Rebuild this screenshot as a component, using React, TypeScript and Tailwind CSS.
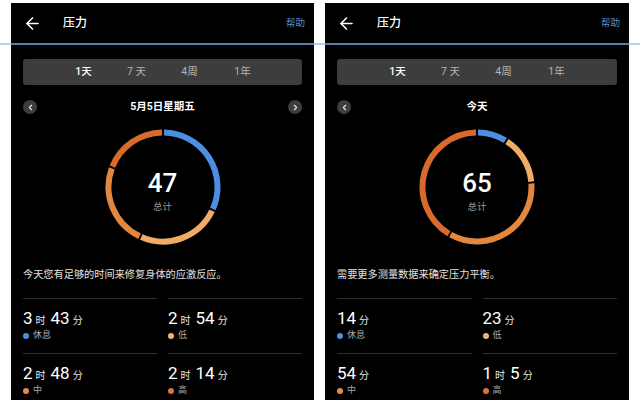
import React from "react";
import { ArrowLeft, ChevronLeft, ChevronRight } from "lucide-react";

type Level = "rest" | "low" | "mid" | "high";

const COLORS: Record<Level, { ring: string; dot: string; label: string }> = {
  rest: { ring: "#4a8fe2", dot: "#4a8fe2", label: "休息" },
  low: { ring: "#f0ab66", dot: "#f1b372", label: "低" },
  mid: { ring: "#e3873f", dot: "#e58b4b", label: "中" },
  high: { ring: "#d86a2b", dot: "#d8743a", label: "高" },
};

const ORDER: Level[] = ["rest", "low", "mid", "high"];

// angle measured clockwise from 12 o'clock
function arcPath(a0: number, a1: number, r = 54.5, c = 60) {
  const rad = (a: number) => ((a - 90) * Math.PI) / 180;
  const x0 = c + r * Math.cos(rad(a0));
  const y0 = c + r * Math.sin(rad(a0));
  const x1 = c + r * Math.cos(rad(a1));
  const y1 = c + r * Math.sin(rad(a1));
  const large = a1 - a0 > 180 ? 1 : 0;
  return `M ${x0} ${y0} A ${r} ${r} 0 ${large} 1 ${x1} ${y1}`;
}

function StressRing({ minutes, total }: { minutes: Record<Level, number>; total: number }) {
  const sum = ORDER.reduce((s, k) => s + minutes[k], 0);
  let start = 0;
  const arcs = ORDER.map((k) => {
    const sweep = (minutes[k] / sum) * 360;
    const seg = { k, a0: start + 1, a1: start + sweep - 1 };
    start += sweep;
    return seg;
  });
  return (
    <div className="relative w-[120px] h-[120px]">
      <svg width="120" height="120" viewBox="0 0 120 120">
        {arcs.map((a) => (
          <path
            key={a.k}
            d={arcPath(a.a0, a.a1)}
            fill="none"
            stroke={COLORS[a.k].ring}
            strokeWidth="6"
          />
        ))}
      </svg>
      <div className="absolute inset-0 flex flex-col items-center pt-[41px]">
        <span className="text-[26px] leading-[30px] font-medium text-white">{total}</span>
        <span className="text-[9.5px] leading-[13px] text-[#9c9c9c] mt-[2px]">总计</span>
      </div>
    </div>
  );
}

function Duration({ m }: { m: number }) {
  const h = Math.floor(m / 60);
  const r = m % 60;
  return (
    <div className="flex items-baseline h-[20px] leading-[20px] text-white">
      {h > 0 && (
        <>
          <span className="text-[17px]">{h}</span>
          <span className="text-[10px] ml-[3px] mr-[5px] text-[#e6e6e6]">时</span>
        </>
      )}
      <span className="text-[17px]">{r}</span>
      <span className="text-[10px] ml-[3px] text-[#e6e6e6]">分</span>
    </div>
  );
}

function StatCell({ level, m }: { level: Level; m: number }) {
  return (
    <div className="border-t border-[#2f2f2f] pt-[9px] pb-[11px]">
      <Duration m={m} />
      <div className="flex items-center h-[13px] mt-[1px]">
        <span
          className="w-[6px] h-[6px] rounded-full"
          style={{ backgroundColor: COLORS[level].dot }}
        />
        <span className="ml-[4px] text-[9px] leading-[13px] text-[#a8a8a8]">
          {COLORS[level].label}
        </span>
      </div>
    </div>
  );
}

function RoundButton({ dir }: { dir: "left" | "right" }) {
  return (
    <div className="w-[14px] h-[14px] rounded-full bg-[#3d3d3d] flex items-center justify-center">
      {dir === "left" ? (
        <ChevronLeft size={9} strokeWidth={3} color="#e8e8e8" />
      ) : (
        <ChevronRight size={9} strokeWidth={3} color="#e8e8e8" />
      )}
    </div>
  );
}

function Panel({
  width,
  dateLabel,
  hasNext,
  total,
  minutes,
  message,
}: {
  width: string;
  dateLabel: string;
  hasNext: boolean;
  total: number;
  minutes: Record<Level, number>;
  message: string;
}) {
  const tabs = ["1天", "7 天", "4周", "1年"];
  return (
    <div className={`relative z-10 bg-black h-[397px] overflow-hidden shrink-0 ${width}`}>
      <div className="h-[42px] flex items-center border-b-2 border-[#4f80b0]">
        <div className="w-[52px] pl-[12px] flex items-center">
          <ArrowLeft size={19} strokeWidth={2} color="#ffffff" />
        </div>
        <span className="text-[12px] font-medium text-white">压力</span>
        <span className="ml-auto pr-[9px] text-[9.5px] text-[#5f8fcc]">帮助</span>
      </div>

      <div className="px-[12px]">
        <div className="mt-[14px] h-[26px] rounded-[3px] bg-[#3d3d3d] flex items-center pl-[34px]">
          {tabs.map((t, i) => (
            <div
              key={t}
              className={`w-[53px] text-center text-[10.5px] ${
                i === 0 ? "text-white font-medium" : "text-[#b4b4b4]"
              }`}
            >
              {t}
            </div>
          ))}
        </div>

        <div className="mt-[15px] h-[14px] flex items-center justify-between">
          <RoundButton dir="left" />
          <span className="text-[10.5px] font-bold text-white">{dateLabel}</span>
          {hasNext ? <RoundButton dir="right" /> : <div className="w-[14px]" />}
        </div>

        <div className="mt-[13px] flex justify-center">
          <StressRing minutes={minutes} total={total} />
        </div>

        <p className="mt-[20px] text-[10.2px] leading-[16px] text-[#e2e2e2]">{message}</p>

        <div className="mt-[15px] grid grid-cols-2 gap-x-[11px]">
          {ORDER.map((k) => (
            <StatCell key={k} level={k} m={minutes[k]} />
          ))}
        </div>
      </div>
    </div>
  );
}

export default function App() {
  return (
    <div
      className="relative w-[640px] h-[400px] bg-white overflow-hidden flex gap-[11px] pl-[11px] pt-[3px]"
      style={{ fontFamily: "Roboto, 'Noto Sans CJK SC', sans-serif" }}
    >
      <div className="absolute left-0 right-0 top-[43px] h-[2px] bg-[#b7d0e4]" />
      <Panel
        width="w-[303px]"
        dateLabel="5月5日星期五"
        hasNext
        total={47}
        minutes={{ rest: 223, low: 174, mid: 168, high: 134 }}
        message="今天您有足够的时间来修复身体的应激反应。"
      />
      <Panel
        width="w-[304px]"
        dateLabel="今天"
        hasNext={false}
        total={65}
        minutes={{ rest: 14, low: 23, mid: 54, high: 65 }}
        message="需要更多测量数据来确定压力平衡。"
      />
    </div>
  );
}
